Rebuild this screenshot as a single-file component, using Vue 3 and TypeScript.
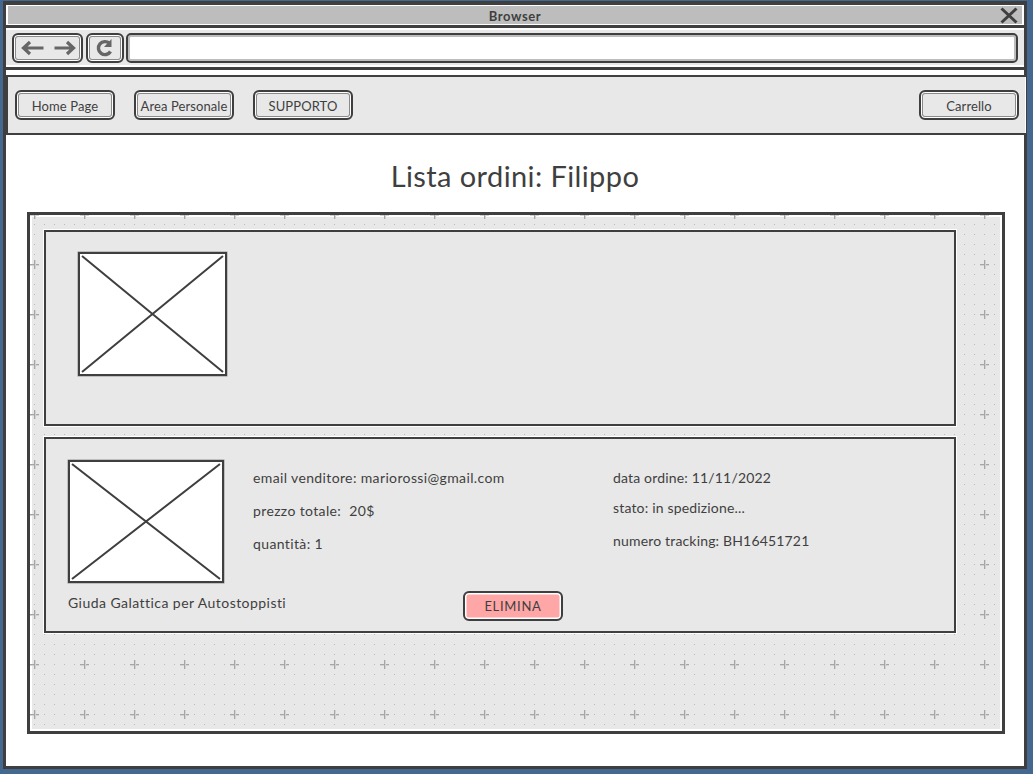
<script setup lang="ts">
const navLeft: string[] = ['Home Page', 'Area Personale', 'SUPPORTO']
const detailsLeft: string[] = ['email venditore: mariorossi@gmail.com', 'prezzo totale:  20$', 'quantità: 1']
const detailsRight: string[] = ['data ordine: 11/11/2022', 'stato: in spedizione...', 'numero tracking: BH16451721']
</script>

<template>
  <div class="desktop">
    <div class="window">
      <header class="titlebar">
        <span class="title">Browser</span>
        <svg class="close" width="18" height="17" viewBox="0 0 18 17">
          <path d="M1.5 1.5 L16.5 15.5 M16.5 1.5 L1.5 15.5" stroke="#3f3f3f" stroke-width="3" fill="none" />
        </svg>
      </header>
      <div class="toolbar">
        <div class="tool tool-nav">
          <svg width="56" height="20" viewBox="0 0 56 20">
            <path d="M23.5 10 H4 M10 4 L3.5 10 L10 16" stroke="#666" stroke-width="3.2" fill="none" />
            <path d="M34.5 10 H53 M47 4 L53.5 10 L47 16" stroke="#666" stroke-width="3.2" fill="none" />
          </svg>
        </div>
        <div class="tool tool-reload">
          <svg width="20" height="20" viewBox="0 0 20 20">
            <path d="M15.5 13.5 A6.5 6.5 0 1 1 14.5 5.5" stroke="#666" stroke-width="3.4" fill="none" />
            <path d="M16.5 1 V9 H9 Z" fill="#666" />
          </svg>
        </div>
        <div class="url"></div>
      </div>
      <nav class="navbar">
        <div class="nav-left">
          <button v-for="item in navLeft" :key="item" class="btn">{{ item }}</button>
        </div>
        <button class="btn">Carrello</button>
      </nav>
      <main class="content">
        <h1 class="heading">Lista ordini: Filippo</h1>
        <section class="canvas">
          <svg class="grid" width="972" height="516">
            <defs>
              <pattern id="dots" patternUnits="userSpaceOnUse" x="-21" y="-26" width="50" height="50">
                <g fill="#bababa">
                  <rect v-for="n in 25" :key="n" :x="5 + ((n - 1) % 5) * 10" :y="5 + Math.floor((n - 1) / 5) * 10" width="1" height="1" />
                </g>
                <rect x="21" y="25" width="9" height="1" fill="#a6a6a6" />
                <rect x="21" y="26" width="9" height="1" fill="#d2d2d2" />
                <rect x="25" y="21" width="1" height="9" fill="#a6a6a6" />
                <rect x="26" y="21" width="1" height="9" fill="#d2d2d2" />
              </pattern>
            </defs>
            <rect width="100%" height="100%" fill="url(#dots)" />
          </svg>
          <article class="card card-top">
            <div class="placeholder ph-top">
              <svg width="100%" height="100%" viewBox="0 0 144 118" preserveAspectRatio="none">
                <path d="M2 2 L142 116 M142 2 L2 116" stroke="#3f3f3f" stroke-width="2" fill="none" />
              </svg>
            </div>
          </article>
          <article class="card card-order">
            <div class="order-main">
              <div class="placeholder ph-order">
                <svg width="100%" height="100%" viewBox="0 0 152 119" preserveAspectRatio="none">
                  <path d="M2 2 L150 117 M150 2 L2 117" stroke="#3f3f3f" stroke-width="2" fill="none" />
                </svg>
              </div>
              <ul class="facts facts-left">
                <li v-for="d in detailsLeft" :key="d">{{ d }}</li>
              </ul>
              <ul class="facts facts-right">
                <li v-for="d in detailsRight" :key="d">{{ d }}</li>
              </ul>
            </div>
            <div class="order-foot">
              <span class="caption">Giuda Galattica per Autostoppisti</span>
              <button class="btn btn-danger">ELIMINA</button>
            </div>
          </article>
        </section>
      </main>
    </div>
  </div>
</template>

<style>
html, body { margin: 0; background: #44688f; }
</style>

<style scoped>
* { box-sizing: border-box; }
.desktop {
  width: 1033px;
  height: 774px;
  padding: 1px 6px 5px 3px;
  background: #44688f;
  font-family: "Lato", "Open Sans", sans-serif;
  color: #3f3f3f;
}
.window {
  height: 768px;
  border: solid #3f3f3f;
  border-width: 4px 3px 3px 3px;
  background: #fff;
  display: flex;
  flex-direction: column;
}
.titlebar {
  margin: 1px 2px 0;
  height: 18px;
  padding-top: 2px;
  background: #bdbdbd;
  display: flex;
  align-items: center;
  justify-content: center;
  position: relative;
}
.title { font-size: 13px; font-weight: 700; letter-spacing: .6px; color: #3f3f3f; }
.close { position: absolute; right: 4px; top: 1px; }
.toolbar {
  margin-top: 1px;
  border-top: 3px solid #3f3f3f;
  border-bottom: 3px solid #3f3f3f;
  height: 45px;
  padding: 5px 6px 0;
  display: flex;
  gap: 3px;
  background: linear-gradient(#fff 0 2px, #e8e8e8 2px 37px, #fff 37px);
}
.tool {
  border: 2px solid #3f3f3f;
  border-radius: 6px;
  box-shadow: inset 0 0 0 1px #fff, inset 0 0 0 2px #8a8a8a;
  display: flex;
  align-items: center;
  justify-content: center;
  height: 30px;
}
.tool-nav { width: 71px; }
.tool-reload { width: 38px; }
.url {
  flex: 1;
  height: 30px;
  margin-left: -1px;
  background: #fff;
  border: 2px solid #3f3f3f;
  border-radius: 5px;
  box-shadow: inset 0 0 0 2px #bdbdbd;
}
.navbar {
  margin: 5px -2px 0 0;
  height: 60px;
  border: solid #3f3f3f;
  border-width: 2px 0 2px 2px;
  background: #e8e8e8;
  box-shadow: inset -1px 0 0 #fff;
  display: flex;
  align-items: center;
  justify-content: space-between;
  padding: 0 7px 0 7px;
}
.nav-left { display: flex; gap: 19px; }
.btn {
  width: 100px;
  height: 30px;
  padding: 1px 0 0;
  border: 2px solid #3f3f3f;
  border-radius: 6px;
  background: #e8e8e8;
  box-shadow: inset 0 0 0 1px #fff, inset 0 0 0 2px #8a8a8a;
  color: #3f3f3f;
  font-family: inherit;
  font-size: 13px;
  letter-spacing: .1px;
}
.content { flex: 1; display: flex; flex-direction: column; padding: 0 19px 0 21px; }
.heading {
  margin: 24px 0 0;
  height: 33px;
  text-align: center;
  font-size: 29px;
  line-height: 33px;
  font-weight: 400;
  letter-spacing: .4px;
  padding-right: 2px;
}
.canvas {
  position: relative;
  margin-top: 20px;
  height: 522px;
  width: 978px;
  border: 3px solid #3f3f3f;
  background: #e8e8e8;
  box-shadow: inset 0 0 0 2px #fff;
  padding: 15px 46px 0 14px;
  display: flex;
  flex-direction: column;
  gap: 11px;
}
.grid { position: absolute; left: 0; top: 0; }
.card {
  position: relative;
  height: 196px;
  width: 912px;
  border: 2px solid #3f3f3f;
  background: #e8e8e8;
  box-shadow: 0 0 0 1px #fff;
}
.card-top { padding: 20px 0 0 32px; }
.placeholder {
  border: 2px solid #3f3f3f;
  box-shadow: 0 0 0 .5px rgba(63, 63, 63, .5);
  background: #fff;
  display: block;
}
.placeholder svg { display: block; }
.ph-top { width: 149px; height: 124px; }
.ph-order { width: 156px; height: 123px; flex: none; }
.card-order { padding: 21px 0 0 22px; }
.order-main { display: flex; }
.facts {
  list-style: none;
  margin: 0;
  padding: 0;
  font-size: 14px;
  line-height: 20px;
  white-space: pre;
}
.facts-left { width: 360px; margin-left: 29px; padding-top: 8px; letter-spacing: .37px; }
.facts-left li + li { margin-top: 13px; }
.facts-right { padding-top: 8px; letter-spacing: .17px; }
.facts-right li + li { margin-top: 10px; }
.facts-right li:last-child { margin-top: 13px; }
.order-foot { display: flex; align-items: center; margin-top: 8px; }
.caption { width: 395px; font-size: 14px; letter-spacing: .45px; margin-top: -8px; }
.btn-danger { background: #ffa6a6; padding-top: 0; letter-spacing: .7px; box-shadow: inset 0 0 0 1.5px #fff; }
</style>
